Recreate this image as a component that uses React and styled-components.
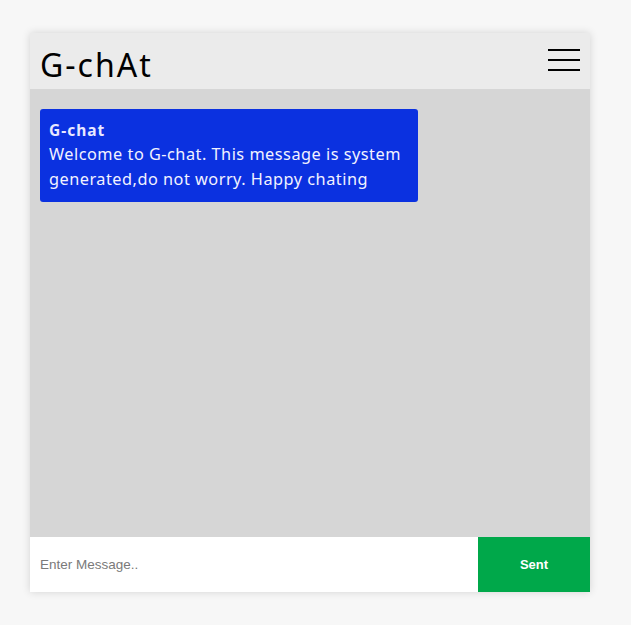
import React from "react";
import styled, { createGlobalStyle } from "styled-components";

const Global = createGlobalStyle`
  body {
    margin: 0;
    background: #f7f7f7;
    font-family: "Liberation Sans", Arial, sans-serif;
  }
`;

const messages = [
  {
    from: "G-chat",
    text: "Welcome to G-chat. This message is system generated,do not worry. Happy chating",
  },
];

const App = () => {
  return (
    <>
      <Global />
      <Page>
        <Card>
          <Header>
            <Logo>G-chAt</Logo>
            <Burger aria-label="menu">
              <Line />
              <Line />
              <Line />
            </Burger>
          </Header>
          <Chat>
            {messages.map((m, i) => (
              <Bubble key={i}>
                <From>{m.from}</From>
                <Body>{m.text}</Body>
              </Bubble>
            ))}
          </Chat>
          <Footer>
            <Input placeholder="Enter Message.." autoFocus />
            <Send>Sent</Send>
          </Footer>
        </Card>
      </Page>
    </>
  );
};

export default App;

const Page = styled.div`
  padding: 33px 41px 33px 30px;
`;

const Card = styled.div`
  width: 560px;
  height: 559px;
  display: flex;
  flex-direction: column;
  box-shadow: 0 0 8px rgba(0, 0, 0, 0.15);
`;

const Header = styled.div`
  height: 56px;
  flex-shrink: 0;
  background: #ebebeb;
  display: flex;
  align-items: center;
  justify-content: space-between;
  padding: 0 10px;
  box-sizing: border-box;
`;

const Logo = styled.div`
  font-family: "Noto Sans", "Open Sans", sans-serif;
  font-size: 32px;
  line-height: 40px;
  letter-spacing: 2px;
  color: #000;
  margin-top: 8px;
`;

const Burger = styled.div`
  width: 32px;
  display: flex;
  flex-direction: column;
  gap: 8px;
  margin-top: -2px;
`;

const Line = styled.span`
  display: block;
  height: 2px;
  background: #000;
`;

const Chat = styled.div`
  flex: 1;
  background: #d6d6d6;
  padding: 20px 10px;
  box-sizing: border-box;
`;

const Bubble = styled.div`
  width: 378px;
  box-sizing: border-box;
  background: #0b31e0;
  border-radius: 3px;
  padding: 9px 9px 10px;
  color: #fff;
  font-family: "Noto Sans", "Open Sans", sans-serif;
`;

const From = styled.div`
  font-weight: 700;
  font-size: 15.5px;
  line-height: 24px;
  letter-spacing: 1px;
  color: #e8e8ff;
`;

const Body = styled.div`
  font-size: 16.3px;
  line-height: 25px;
  letter-spacing: 0.5px;
  color: #f2f2ff;
`;

const Footer = styled.div`
  height: 55px;
  flex-shrink: 0;
  display: flex;
`;

const Input = styled.input`
  flex: 1;
  border: none;
  outline: none;
  background: #fff;
  padding: 0 10px;
  font-family: "Liberation Sans", Arial, sans-serif;
  font-size: 13.5px;
  &::placeholder {
    color: #7a7a7a;
  }
`;

const Send = styled.button`
  width: 112px;
  border: none;
  background: #00a84a;
  color: #fff;
  font-family: "Liberation Sans", Arial, sans-serif;
  font-weight: 700;
  font-size: 13px;
  cursor: pointer;
`;
